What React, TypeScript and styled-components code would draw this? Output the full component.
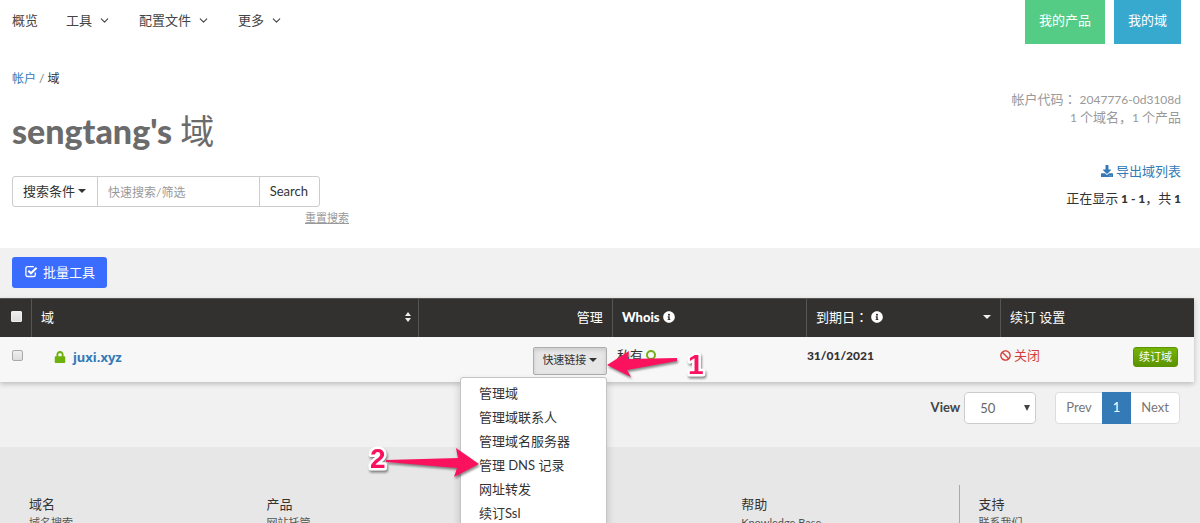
import React from 'react';
import styled, { createGlobalStyle, css } from 'styled-components';
import { FaDownload, FaInfoCircle, FaLock, FaBan } from 'react-icons/fa';
import { ChevronDown } from 'lucide-react';

const stack = `Lato, "Noto Sans CJK SC", sans-serif`;

const Global = createGlobalStyle`
  *, *::before, *::after { box-sizing: border-box; }
  html, body { height: 100%; margin: 0; overflow: hidden; }
  body { background: #fff; color: #333; font: 13px/18px ${stack}; }
  a { color: inherit; text-decoration: none; }
  button, input, select { font: inherit; margin: 0; }
`;

const TopNav = styled.header`
  display: flex;
  justify-content: space-between;
  height: 44px;
  padding: 0 19px 0 12px;
`;
const NavLinks = styled.nav`
  display: flex;
  gap: 28px;
  padding-top: 11px;
`;
const NavLink = styled.a`
  display: flex;
  align-items: center;
  gap: 6px;
  height: 18px;
  color: #444;
`;
const NavTabs = styled.nav`
  display: flex;
  gap: 9px;
`;
const NavTab = styled.a<{ $color: string }>`
  height: 44px;
  padding: 11px 14px 0;
  background: ${(p) => p.$color};
  color: #fff;
`;

const Intro = styled.section`
  display: flex;
  justify-content: space-between;
  height: 204px;
  padding: 26px 19px 0 12px;
`;
const Breadcrumb = styled.nav`
  font-size: 12px;
  color: #777;
  & a { color: #337ab7; }
  & span { color: #333; }
`;
const Title = styled.h1`
  margin: 21px 0 23px;
  font-size: 34px;
  line-height: 44px;
  font-weight: 900;
  color: #6b6b6b;
  & span { font-weight: 400; }
`;
const SearchForm = styled.form`
  display: flex;
  width: 308px;
  height: 31px;
  border: 1px solid #ccc;
  border-radius: 3px;
  background: #fff;
`;
const SearchButton = styled.button`
  display: flex;
  align-items: center;
  gap: 3px;
  padding: 0 11px 2px 10px;
  border: 0;
  background: none;
  color: #333;
`;
const SearchInput = styled.input`
  flex: 1;
  min-width: 0;
  padding: 0 10px;
  border: solid #ccc;
  border-width: 0 1px;
  background: none;
  outline: 0;
  &::placeholder { color: #999; opacity: 1; font-size: 12px; }
`;
const ResetLink = styled.a`
  display: block;
  width: 337px;
  padding-top: 2px;
  text-align: right;
  font-size: 11px;
  color: #999;
  & span { text-decoration: underline; }
`;
const Caret = styled.i<{ $light?: boolean }>`
  width: 0;
  height: 0;
  border: 4px solid transparent;
  border-top-color: ${(p) => (p.$light ? '#eee' : '#333')};
  border-bottom: 0;
`;

const Account = styled.div`
  display: flex;
  flex-direction: column;
  align-items: flex-end;
  padding-top: 20px;
  color: #999;
`;
const AccountLine = styled.div`
  height: 18px;
  white-space: nowrap;
`;
const Figure = styled.span<{ $bold?: boolean }>`
  font-size: 12px;
  font-weight: ${(p) => (p.$bold ? 900 : 400)};
`;
const CenteredMark = styled.span`
  font-family: "Noto Sans CJK TC", sans-serif;
`;
const ExportLink = styled.a`
  display: flex;
  align-items: center;
  gap: 3px;
  margin: 36px 0 9px;
  color: #337ab7;
`;
const Showing = styled(AccountLine)`
  color: #333;
`;

const ListSection = styled.main`
  padding: 9px 6px 23px 0;
  background: #f1f1f1;
`;
const BulkButton = styled.button`
  display: flex;
  align-items: center;
  gap: 5px;
  height: 31px;
  margin: 0 0 10px 12px;
  padding: 0 12px 2px 13px;
  border: 0;
  border-radius: 3px;
  background: #3a6cfd;
  color: #fff;
`;
const Table = styled.table`
  width: 100%;
  table-layout: fixed;
  border-collapse: separate;
  border-spacing: 0;
  box-shadow: 0 2px 5px rgba(0, 0, 0, 0.22);
`;
const CheckColumn = styled.col`
  width: 31px;
`;
const DomainColumn = styled.col`
  width: 32.4%;
`;
const HeadCell = styled.th<{ $right?: boolean }>`
  height: 39px;
  padding: 0 9px 2px;
  border-top: 1px solid #555;
  background: #333130;
  color: #fff;
  font-weight: ${(p) => (p.$right ? 400 : 900)};
  text-align: ${(p) => (p.$right ? 'right' : 'left')};
  & + & { border-left: 1px solid #555; }
`;
const HeadLabel = styled.div`
  display: flex;
  align-items: center;
  gap: 3px;
  & > i { margin-left: auto; }
  & > span { font-weight: 400; }
`;
const SortIcon = styled.i`
  display: grid;
  gap: 2px;
  margin-right: -2px;
  &::before, &::after {
    content: '';
    border: 3px solid transparent;
  }
  &::before { border-top: 0; border-bottom: 4px solid #eee; }
  &::after { border-bottom: 0; border-top: 4px solid #eee; }
`;
const Cell = styled.td<{ $left?: number; $right?: number }>`
  height: 45px;
  padding: 9px ${(p) => p.$right ?? 0}px 0 ${(p) => p.$left ?? 0}px;
  background: #f7f7f7;
  vertical-align: top;
`;
const Tick = styled.input`
  appearance: none;
  display: block;
  width: 11px;
  height: 11px;
  border: 1px solid #aaa;
  border-radius: 2px;
  background: linear-gradient(#eee, #ddd);
`;
const HeadTick = styled(Tick)`
  margin: 0 0 2px 2px;
  border-color: #eee;
  border-radius: 1px;
`;
const RowTick = styled(Tick)`
  margin-top: 4px;
`;
const IconText = styled.div<{ $color?: string; $gap?: number }>`
  display: flex;
  align-items: center;
  gap: ${(p) => p.$gap ?? 3}px;
  color: ${(p) => p.$color ?? '#333'};
`;
const DomainLink = styled.a`
  color: #337ab7;
  font: 700 13px/22px "Noto Sans", sans-serif;
`;
const RenewButton = styled.button`
  display: block;
  height: 20px;
  margin: 1px 0 0 auto;
  padding: 0 5px 1px;
  border: 1px solid #5a9400;
  border-radius: 3px;
  background: linear-gradient(#75b30a, #5c9400);
  color: #fff;
  font-size: 11px;
  line-height: 16px;
`;
const RenewRow = styled.div`
  display: flex;
  align-items: flex-start;
`;
const Ring = styled.span`
  width: 10px;
  height: 10px;
  border: 2px solid #72b01d;
  border-radius: 50%;
`;
const Dropdown = styled.div`
  position: relative;
  width: 74px;
  margin: 1px 0 0 auto;
`;
const QuickButton = styled.button`
  display: flex;
  align-items: center;
  justify-content: center;
  gap: 3px;
  width: 100%;
  height: 28px;
  padding: 0 0 2px;
  border: 1px solid #adadad;
  border-radius: 2px;
  background: #e6e6e6;
  box-shadow: inset 0 2px 4px rgba(0, 0, 0, 0.12);
  color: #333;
  font-size: 11px;
`;
const Menu = styled.ul`
  position: absolute;
  z-index: 2;
  top: 30px;
  right: 0;
  width: 147px;
  margin: 0;
  padding: 4px 0;
  list-style: none;
  border: 1px solid #c4c4c4;
  border-radius: 3px;
  background: #fff;
  box-shadow: 0 4px 8px rgba(0, 0, 0, 0.18);
`;
const MenuItem = styled.li`
  position: relative;
  padding: 2px 18px 4px;
`;
const markLayer = css`
  position: absolute;
  z-index: 3;
  overflow: visible;
  pointer-events: none;
  filter: drop-shadow(1px 2px 1px rgba(0, 0, 0, 0.45));
  & path { fill: #fa125f; }
  & text {
    fill: #fa125f;
    stroke: #fff;
    stroke-width: 5px;
    stroke-linejoin: round;
    paint-order: stroke;
    font: 700 28px "Liberation Sans", sans-serif;
  }
`;
const ButtonMark = styled.svg`
  ${markLayer}
  top: 0;
  left: 100%;
`;
const ItemMark = styled.svg`
  ${markLayer}
  top: -7px;
  right: calc(100% - 18px);
`;

const Pager = styled.div`
  display: flex;
  justify-content: flex-end;
  align-items: flex-start;
  height: 32px;
  margin-top: 10px;
  padding-right: 14px;
`;
const ViewLabel = styled.label`
  padding: 6px 4px 0 0;
  font-weight: 700;
  color: #444;
`;
const ViewSelect = styled.select`
  appearance: none;
  width: 72px;
  height: 32px;
  padding: 0 15px;
  border: 1px solid #ccc;
  border-radius: 4px;
  background: none;
  color: #666;
`;
const SelectWrap = styled.div`
  position: relative;
  margin-right: 19px;
  border-radius: 4px;
  background: #fff;
  &::after {
    content: '';
    position: absolute;
    top: 13px;
    right: 6px;
    border: 3px solid transparent;
    border-top: 6px solid #444;
    border-bottom: 0;
  }
`;
const Pages = styled.nav`
  display: flex;
  height: 32px;
  border: 1px solid #ddd;
  border-radius: 4px;
  background: #fff;
`;
const PageButton = styled.button<{ $active?: boolean }>`
  height: 32px;
  margin-top: -1px;
  padding: 0 ${(p) => (p.$active ? 11 : 10)}px 2px;
  border: 0;
  background: ${(p) => (p.$active ? '#337ab7' : 'none')};
  color: ${(p) => (p.$active ? '#fff' : '#777')};
`;

const Footer = styled.footer`
  display: grid;
  grid-template-columns: repeat(5, 1fr);
  padding: 38px 4px 40px 9px;
  background: #e7e7e7;
`;
const FooterColumn = styled.section<{ $column: number; $ruled?: boolean }>`
  grid-column: ${(p) => p.$column};
  min-height: 120px;
  padding: 9px 19px;
  border-left: 1px solid ${(p) => (p.$ruled ? '#aaa' : 'transparent')};
  & h2 { margin: 0; font-size: 13px; font-weight: 400; line-height: 20px; }
  & a { display: block; font-size: 11px; line-height: 18px; color: #555; }
`;

const menu = ['管理域', '管理域联系人', '管理域名服务器', '管理 DNS 记录', '网址转发', '续订Ssl'];
const footer = [
  { column: 1, title: '域名', link: '域名搜索' },
  { column: 2, title: '产品', link: '网站托管' },
  { column: 4, title: '帮助', link: 'Knowledge Base' },
  { column: 5, title: '支持', link: '联系我们' },
];

const CheckSquare = () => (
  <svg width="13" height="13" viewBox="0 0 13 13" fill="none" stroke="currentColor" aria-hidden="true">
    <path d="M10.3 7.5v2.4a1.6 1.6 0 0 1-1.6 1.6H2.5A1.6 1.6 0 0 1 .9 9.9V3.2A1.6 1.6 0 0 1 2.5 1.6H8.8" strokeWidth="1.3" />
    <path d="M3.3 5.8L6 8.3L11.6 2.7" strokeWidth="2.2" />
  </svg>
);

export default function App() {
  return (
    <>
      <Global />
      <TopNav>
        <NavLinks>
          <NavLink href="#">概览</NavLink>
          {['工具', '配置文件', '更多'].map((t) => (
            <NavLink href="#" key={t}>{t}<ChevronDown size={13} strokeWidth={2} /></NavLink>
          ))}
        </NavLinks>
        <NavTabs>
          <NavTab href="#" $color="#55cc85">我的产品</NavTab>
          <NavTab href="#" $color="#37a9cf">我的域</NavTab>
        </NavTabs>
      </TopNav>

      <Intro>
        <div>
          <Breadcrumb><a href="#">帐户</a> / <span>域</span></Breadcrumb>
          <Title>sengtang's <span>域</span></Title>
          <SearchForm onSubmit={(e) => e.preventDefault()}>
            <SearchButton type="button">搜索条件<Caret /></SearchButton>
            <SearchInput aria-label="快速搜索" placeholder="快速搜索/筛选" />
            <SearchButton>Search</SearchButton>
          </SearchForm>
          <ResetLink href="#"><span>重置搜索</span></ResetLink>
        </div>
        <Account>
          <AccountLine>帐户代码<CenteredMark>：</CenteredMark><Figure> 2047776-0d3108d</Figure></AccountLine>
          <AccountLine><Figure>1 </Figure>个域名，<Figure>1 </Figure>个产品</AccountLine>
          <ExportLink href="#"><FaDownload size={12} />导出域列表</ExportLink>
          <Showing>正在显示<Figure $bold> 1 - 1</Figure>，共<Figure $bold> 1</Figure></Showing>
        </Account>
      </Intro>

      <ListSection>
        <BulkButton><CheckSquare />批量工具</BulkButton>
        <Table>
          <colgroup>
            <CheckColumn />
            <DomainColumn />
            <col /><col /><col /><col />
          </colgroup>
          <thead>
            <tr>
              <HeadCell><HeadTick type="checkbox" aria-label="全选" /></HeadCell>
              <HeadCell><HeadLabel><span>域</span><SortIcon /></HeadLabel></HeadCell>
              <HeadCell $right>管理</HeadCell>
              <HeadCell><HeadLabel>Whois <FaInfoCircle size={12} /></HeadLabel></HeadCell>
              <HeadCell><HeadLabel><span>到期日<CenteredMark>：</CenteredMark></span><FaInfoCircle size={12} /><Caret $light /></HeadLabel></HeadCell>
              <HeadCell><HeadLabel><span>续订 设置</span></HeadLabel></HeadCell>
            </tr>
          </thead>
          <tbody>
            <tr>
              <Cell $left={12}><RowTick type="checkbox" aria-label="juxi.xyz" /></Cell>
              <Cell $left={23}>
                <IconText $color="#6cb10c" $gap={7}>
                  <FaLock size={12} /><DomainLink href="#">juxi.xyz</DomainLink>
                </IconText>
              </Cell>
              <Cell $right={5}>
                <Dropdown>
                  <QuickButton aria-haspopup="menu" aria-expanded="true">快速链接<Caret /></QuickButton>
                  <Menu>
                    {menu.map((m) => (
                      <MenuItem key={m}>
                        <a href="#">{m}</a>
                        {m.includes('DNS') && (
                          <ItemMark width="110" height="36" viewBox="0 0 110 36">
                            <path d="M110 17 L87 1 L89 11 L17 13 L17 15 L88 21 L85 30 Z" />
                            <text x="1" y="21">2</text>
                          </ItemMark>
                        )}
                      </MenuItem>
                    ))}
                  </Menu>
                  <ButtonMark width="100" height="36" viewBox="0 0 100 36">
                    <path d="M0 18 L22 4 L21 12 L70 11 L70 14 L20 23 L24 30 Z" />
                    <text x="81" y="27">1</text>
                  </ButtonMark>
                </Dropdown>
              </Cell>
              <Cell $left={5}><IconText>私有<Ring /></IconText></Cell>
              <Cell $left={1}><Figure $bold>31/01/2021</Figure></Cell>
              <Cell $right={16}>
                <RenewRow>
                  <IconText $color="#d43f3a"><FaBan size={11} />关闭</IconText>
                  <RenewButton>续订域</RenewButton>
                </RenewRow>
              </Cell>
            </tr>
          </tbody>
        </Table>
        <Pager>
          <ViewLabel htmlFor="view">View</ViewLabel>
          <SelectWrap><ViewSelect id="view"><option>50</option></ViewSelect></SelectWrap>
          <Pages>
            <PageButton>Prev</PageButton>
            <PageButton $active>1</PageButton>
            <PageButton>Next</PageButton>
          </Pages>
        </Pager>
      </ListSection>

      <Footer>
        {footer.map(({ column, title, link }) => (
          <FooterColumn key={title} $column={column} $ruled={column === 5}>
            <h2>{title}</h2>
            <a href="#">{link}</a>
          </FooterColumn>
        ))}
      </Footer>
    </>
  );
}
